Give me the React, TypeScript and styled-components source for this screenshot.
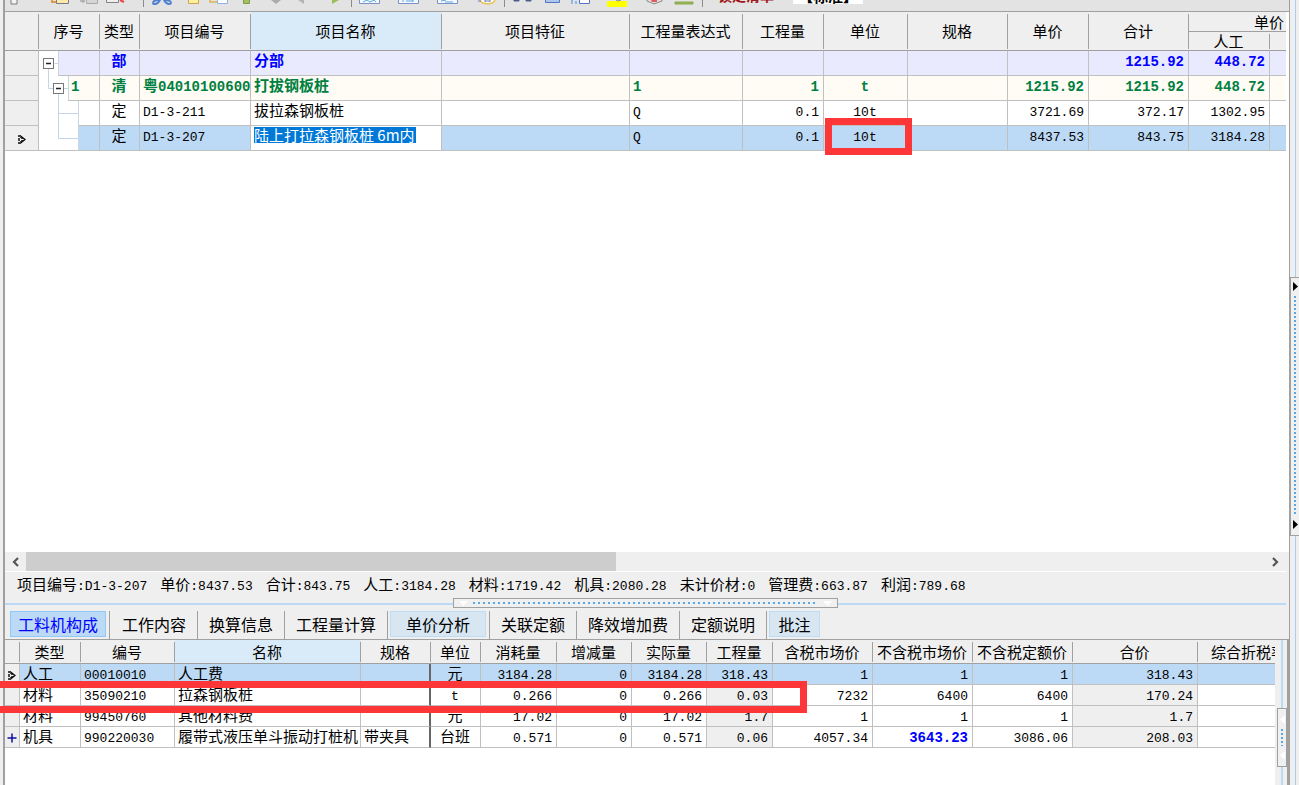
import React from 'react';
import styled, { createGlobalStyle, css } from 'styled-components';

const cjk = '"Noto Sans CJK SC", sans-serif';
const mono = '"Liberation Mono", "Noto Sans CJK SC", monospace';

const c = {
  face: '#efefef',
  bar: '#e3e3e3',
  edge: '#a0a0a0',
  rule: '#c0c0c0',
  hot: '#d9ebf8',
  sel: '#bcdaf6',
  group: '#eaeaff',
  item: '#fffbf5',
  blue: '#0000ff',
  green: '#008040',
  mark: '#fd3737',
};

const GlobalStyle = createGlobalStyle`
  * { box-sizing: border-box; }
  body { margin: 0; background: ${c.face}; font: 15px/18px ${cjk}; color: #000; }
  button, input, select { font: inherit; color: inherit; margin: 0; padding: 0; }
  svg { display: block; }
`;

const Window = styled.div`
  display: flex;
  height: 100vh;
  overflow: hidden;
  padding-left: 3px;
`;

const Main = styled.main`
  flex: 1;
  min-width: 0;
  display: flex;
  flex-direction: column;
  border-left: 2px solid ${c.edge};
`;

/* ---------- toolbar ---------- */

const Toolbar = styled.div`
  flex: none;
  height: 12px;
  display: flex;
  align-items: flex-end;
  overflow: hidden;
  background: ${c.bar};
  border-bottom: 1px solid ${c.edge};
  padding: 0 0 4px 5px;
`;

const ToolButton = styled.button<{ $gap: number }>`
  flex: none;
  border: 0;
  background: none;
  margin-right: ${(p) => p.$gap}px;
`;

const ToolRule = styled.span<{ $gap: number }>`
  flex: none;
  width: 1px;
  height: 12px;
  background: #8c8c8c;
  margin-right: ${(p) => p.$gap}px;
`;

const LockButton = styled.button`
  flex: none;
  border: 0;
  background: none;
  width: 58px;
  margin: 0 18px 3px 14px;
  font-size: 14px;
  font-weight: 700;
  color: #a01818;
  white-space: nowrap;
`;

const ModeSelect = styled.select`
  flex: none;
  appearance: none;
  border: 0;
  width: 70px;
  height: 16px;
  margin-bottom: 3px;
  background: #fff;
  font-weight: 700;
  line-height: 16px;
  text-align: center;
`;

/* ---------- grids ---------- */

const GridPane = styled.section`
  flex: 1;
  min-height: 0;
  background: #fff;
  padding-right: 3px;
`;

const Table = styled.table`
  width: 100%;
  table-layout: fixed;
  border-spacing: 0;
`;

const Th = styled.th<{ $hot?: boolean; $h?: number; $align?: string }>`
  position: relative;
  padding: 0 2px 0 0;
  height: ${(p) => p.$h ?? 24}px;
  font-weight: 400;
  line-height: 18px;
  text-align: ${(p) => p.$align ?? 'center'};
  white-space: nowrap;
  overflow: hidden;
  background: ${(p) => (p.$hot ? c.hot : c.face)};
  border-bottom: 1px solid ${c.edge};
  ${(p) => p.$align === 'left' && css`padding: 0 0 0 13px;`}
  &::after {
    content: '';
    position: absolute;
    top: 2px;
    bottom: 1px;
    right: 0;
    width: 1px;
    background: ${c.edge};
  }
  &:last-child::after { display: none; }
`;

type Tone = 'group' | 'item' | 'plain' | 'sel';

const Tr = styled.tr<{ $tone: Tone }>`
  background: ${(p) => ({ group: c.group, item: c.item, plain: '#fff', sel: c.sel })[p.$tone]};
  ${(p) => p.$tone === 'group' && css`color: ${c.blue}; font-weight: 700;`}
  ${(p) => p.$tone === 'item' && css`color: ${c.green}; font-weight: 700;`}
`;

const Td = styled.td<{ $align?: string; $h: number; $gray?: boolean; $dark?: boolean; $edit?: boolean }>`
  height: ${(p) => p.$h}px;
  padding: 0 4px ${(p) => (p.$h > 22 ? 6 : 2)}px 3px;
  line-height: 18px;
  text-align: ${(p) => p.$align ?? 'left'};
  white-space: nowrap;
  overflow: hidden;
  border-right: 1px solid ${c.rule};
  border-bottom: 1px solid ${c.rule};
  ${(p) => p.$gray && css`background: ${c.face};`}
  ${(p) => p.$edit && css`background: #fff;`}
  ${(p) => p.$dark && css`border-right: 2px solid #666;`}
  &:last-child { border-right: 0; }
`;

const Indicator = styled.td<{ $h: number }>`
  height: ${(p) => p.$h}px;
  padding: 0;
  background: ${c.face};
  border-right: 1px solid ${c.rule};
  border-bottom: 1px solid ${c.rule};
  svg { margin: 2px auto 0; }
`;

const TreeCell = styled.td<{ $last: boolean }>`
  padding: 0;
  background: ${(p) => (p.$last ? `linear-gradient(${c.rule}, ${c.rule}) 0 100% / 100% 1px no-repeat, #fff` : '#fff')};
  border-right: 1px solid ${c.rule};
`;

const TreeInner = styled.div`
  display: flex;
  height: 25px;
`;

const TreeLabel = styled.div<{ $tone: Tone }>`
  flex: 1;
  padding-left: 2px;
  background: ${(p) => ({ group: c.group, item: c.item, plain: '#fff', sel: c.sel })[p.$tone]};
  border-left: 1px solid #c9d6e2;
  border-bottom: 1px solid ${c.rule};
`;

const Latin = styled.span<{ $bold?: boolean; $color?: string }>`
  font-family: ${mono};
  font-size: ${(p) => (p.$bold ? 14 : 13)}px;
  font-weight: ${(p) => (p.$bold ? 700 : 400)};
  line-height: 0;
  color: ${(p) => p.$color ?? 'inherit'};
`;

const EditBox = styled.input`
  display: block;
  width: 162px;
  height: 16px;
  border: 0;
  outline: 0;
  background: #0078d7;
  color: #fff;
`;

const UnitMark = styled.span`
  position: absolute;
  z-index: 2;
  inset: -8px -5px -5px 1px;
  border: 7px solid ${c.mark};
  pointer-events: none;
`;

const MarkedTd = styled(Td)`
  position: relative;
  overflow: visible;
`;

/* ---------- scroll bar, summary, splitter ---------- */

const ScrollBar = styled.div`
  flex: none;
  display: flex;
  justify-content: space-between;
  height: 20px;
  margin-right: 3px;
  background: ${c.face};
  border-bottom: 1px solid #fff;
`;

const ScrollArrow = styled.button`
  width: 21px;
  border: 0;
  background: ${c.face};
  display: grid;
  place-items: center;
`;

const ScrollTrack = styled.div`
  flex: 1;
`;

const ScrollThumb = styled.div`
  width: 47.6%;
  height: 100%;
  background: #cdcdcd;
`;

const Summary = styled.div`
  flex: none;
  display: flex;
  gap: 13px;
  height: 26px;
  padding: 3px 0 0 12px;
  white-space: nowrap;
`;

const Splitter = styled.div`
  flex: none;
  height: 10px;
  margin-right: 3px;
  display: flex;
  justify-content: center;
  background: linear-gradient(${c.sel}, ${c.sel}) 0 5px / 100% 2px no-repeat;
`;

const SplitHandle = styled.div`
  width: 385px;
  display: flex;
  align-items: center;
  justify-content: space-between;
  border: 1px solid ${c.edge};
  background: #f0f0f0;
  padding: 0 5px;
`;

const HDots = styled.span`
  flex: 1;
  height: 2px;
  margin: 0 5px;
  background: repeating-linear-gradient(90deg, #5aa7e6 0 2px, transparent 2px 5px);
`;

/* ---------- tabs ---------- */

const Tabs = styled.nav`
  flex: none;
  display: flex;
  height: 32px;
  padding-top: 3px;
  border-bottom: 1px solid ${c.edge};
`;

const TabSlot = styled.div<{ $pad: string; $end?: boolean }>`
  display: flex;
  padding: ${(p) => p.$pad};
  border-right: ${(p) => (p.$end ? '0' : `1px solid ${c.edge}`)};
`;

const Tab = styled.button<{ $kind: 'active' | 'hot' | 'plain'; $w?: number }>`
  width: ${(p) => (p.$w ? `${p.$w}px` : 'auto')};
  height: 26px;
  padding: 0;
  font-size: 16px;
  line-height: 24px;
  white-space: nowrap;
  background: none;
  border: 0;
  ${(p) => p.$kind === 'active' && css`background: ${c.sel}; border: 1px solid #90c8f6; color: ${c.blue};`}
  ${(p) => p.$kind === 'hot' && css`background: #d8e6f2; border: 1px solid #c0dcf3;`}
`;

/* ---------- lower pane ---------- */

const LowerPane = styled.section`
  position: relative;
  flex: none;
  height: 145px;
  display: flex;
  background: #fff;
`;

const LowerGrid = styled.div`
  flex: 1;
  min-width: 0;
`;

const LowerStrip = styled.div`
  flex: none;
  width: 14px;
  background: linear-gradient(${c.sel}, ${c.sel}) 6px 0 / 2px 100% no-repeat, ${c.face};
  border-right: 2px solid ${c.edge};
  padding: 68px 0 0 2px;
`;

const StripHandle = styled.div`
  width: 10px;
  height: 59px;
  display: flex;
  flex-direction: column;
  align-items: center;
  justify-content: space-between;
  padding: 6px 0;
  border: 1px solid ${c.edge};
  background: #f0f0f0;
`;

const VDots = styled.span<{ $pitch: number }>`
  flex: 1;
  width: 2px;
  margin: 5px 0;
  background: repeating-linear-gradient(#5aa7e6 0 2px, transparent 2px ${(p) => p.$pitch}px);
`;

const RowMark = styled.span`
  position: absolute;
  z-index: 2;
  top: 41px;
  left: -5px;
  width: 807px;
  height: 32px;
  border: 7px solid ${c.mark};
  border-left: 0;
  pointer-events: none;
`;

/* ---------- right edge ---------- */

const SideStrip = styled.aside`
  flex: none;
  width: 10px;
  display: flex;
  flex-direction: column;
  border-left: 1px solid ${c.edge};
  background: linear-gradient(#a9cdf0, #a9cdf0) 5px 0 / 1px 100% no-repeat, ${c.face};
`;

const Space = styled.div<{ $grow: number }>`
  flex: ${(p) => p.$grow} 0 0;
`;

const SideHandle = styled.div`
  flex: none;
  height: 259px;
  display: flex;
  flex-direction: column;
  align-items: center;
  padding: 4px 0 6px;
  border: 1px solid ${c.edge};
  border-right: 0;
  background: #f0f0f0;
`;

/* ---------- drawings ---------- */

const Pointer = () => (
  <svg width="8" height="9" viewBox="0 0 8 9">
    <path d="M1 0v2M1 3v3M1 7v2M3 2v1M3 6v1M4 3v1M4 5v1" stroke="#000" strokeWidth="1.400" />
    <path d="M2 0.500L7 4.500L2 8.500" fill="none" stroke="#000" strokeWidth="1.200" />
  </svg>
);

const Triangle = ({ d, fill, w = 7, h = 9 }: { d: string; fill: string; w?: number; h?: number }) => (
  <svg width={w} height={h} viewBox={`0 0 ${w} ${h}`}>
    <path d={d} fill={fill} />
  </svg>
);

const Chevron = ({ right }: { right?: boolean }) => (
  <svg width="9" height="10" viewBox="0 0 9 10">
    <path d={right ? 'M2 1l4 4-4 4' : 'M7 1L3 5l4 4'} fill="none" stroke="#555" strokeWidth="2.200" />
  </svg>
);

const treeShapes: { w: number; box?: [number, number]; lines: string }[] = [
  { w: 19, box: [4, 7], lines: 'M15.500 12.500H19M9.500 18V25' },
  { w: 29, box: [14, 7], lines: 'M9.500 0V12.500H14M25 12.500H29M19.500 18V25' },
  { w: 39, lines: 'M19.500 0V25M19.500 12.500H39' },
  { w: 39, lines: 'M19.500 0V12.500H39' },
];

const TreeLines = ({ row }: { row: number }) => {
  const { w, box, lines } = treeShapes[row];
  return (
    <svg width={w} height="25" viewBox={`0 0 ${w} 25`}>
      <path d={lines} fill="none" stroke="#c3d5e6" />
      {box && (
        <>
          <rect x={box[0] + 0.5} y={box[1] + 0.5} width="10" height="10" fill="#fff" stroke="#777" />
          <path d={`M${box[0] + 3} ${box[1] + 5.5}h5`} stroke="#222" strokeWidth="1.500" />
        </>
      )}
    </svg>
  );
};

type Tool = { label: string; w: number; gap: number; art?: React.ReactNode };

/* Every drawing is seven units high and hangs from the top of the bar. */
const tools: Tool[] = [
  { label: '新建', w: 8, gap: 33, art: <path d="M1 0v4h6V0" fill="#f4f4f4" stroke="#777b86" /> },
  { label: '粘贴', w: 18, gap: 10, art: <><path d="M1 0v2h4" fill="none" stroke="#e09a4c" strokeWidth="2" /><path d="M5.500 0v3.500h12V0" fill="#ffe9a8" stroke="#777b86" /></> },
  { label: '复制', w: 19, gap: 8, art: <><path d="M1 1h5M4 0v3" stroke="#aaa" strokeWidth="1.500" /><path d="M7.500 0v3.500h11V0" fill="#d6d6d6" stroke="#aaa" /></> },
  { label: '删除', w: 19, gap: 18, art: <><path d="M.5 0v2.500h12V0" fill="#eee" stroke="#81838c" /><path d="M14 0l4 2" stroke="#e44" strokeWidth="2" /></> },
  { label: '', w: 1, gap: 8 },
  { label: '剪切', w: 20, gap: 16, art: <path d="M1 3c0-3 4-3 7-3-1 2-3 4-5 4S1 4 1 3zM19 3c0-3-4-3-7-3 1 2 3 4 5 4s2 0 2-1z" fill="none" stroke="#4f81cf" strokeWidth="1.800" /> },
  { label: '便签', w: 11, gap: 10, art: <path d="M.5 0v3.500h10V0" fill="#fff0a0" stroke="#cfa64a" /> },
  { label: '插入', w: 20, gap: 14, art: <><path d="M1 0v2h8" fill="#ffeb9c" stroke="#dcb45c" strokeWidth="1.500" /><path d="M8.500 0v3.500h10V0" fill="#fff" stroke="#8db2e3" /></> },
  { label: '标记', w: 8, gap: 18, art: <path d="M.5 0v3.500h6V0" fill="#a3c163" stroke="#7f9c45" /> },
  { label: '下移', w: 14, gap: 15, art: <path d="M2 0h10L7 4z" fill="#ababab" /> },
  { label: '后退', w: 6, gap: 28, art: <path d="M0 0h6v4z" fill="#b5b5b5" /> },
  { label: '前进', w: 8, gap: 11, art: <path d="M0 4V0h7z" fill="#9bbf58" /> },
  { label: '', w: 1, gap: 7 },
  { label: '视图一', w: 21, gap: 18, art: <><path d="M.5 0v3.500h20V0" fill="#f5f9ff" stroke="#7d90c8" /><path d="M4 2l4-2 3 2 4-2 2 2" fill="none" stroke="#55a9dc" /></> },
  { label: '视图二', w: 21, gap: 18, art: <><path d="M.5 0v3.500h20V0" fill="#f5f9ff" stroke="#7d90c8" /><path d="M5 2V0M8 1h7M15 2V0" stroke="#55a9dc" /></> },
  { label: '视图三', w: 21, gap: 20, art: <><path d="M.5 0v3.500h20V0" fill="#f5f9ff" stroke="#7d90c8" /><path d="M4 1l5-1M8 2h8" stroke="#55a9dc" /></> },
  { label: '查看', w: 18, gap: 8, art: <><path d="M2 0c2 5 13 5 15 0" fill="#fff" stroke="#eac34c" strokeWidth="1.500" /><path d="M7 2V0M12 2V0M7 1h5M0 1h3" stroke="#6c7fc0" /></> },
  { label: '', w: 1, gap: 8 },
  { label: '查找', w: 19, gap: 13, art: <path d="M1 0v1h5V0M13 0v1h5V0" fill="#4c5f8c" stroke="#4c5f8c" /> },
  { label: '窗口', w: 15, gap: 11, art: <path d="M.5 0v2.500h14V0" fill="#abc7ee" stroke="#5575c2" /> },
  { label: '布局', w: 20, gap: 16, art: <><path d="M1 4V0M5 4V1" stroke="#8db8e8" strokeWidth="2" /><path d="M8.500 0v3.500h10V0" fill="#fff" stroke="#5575c2" /></> },
  { label: '颜色', w: 20, gap: 19, art: <><path d="M0 1h20v6H0z" fill="#ff0" /><path d="M9 0l2 1 3-1" stroke="#888" fill="none" /></> },
  { label: '模型', w: 17, gap: 11, art: <><path d="M1 0v1l7 3 8-3V0" fill="#ddd" stroke="#8b8b8b" /><path d="M5 0h6v2H6z" fill="#e25b5b" /></> },
  { label: '填充', w: 20, gap: 8, art: <path d="M1 2h18v2H1z" fill="#9bb857" stroke="#8aa84a" /> },
  { label: '', w: 1, gap: 0 },
];

/* ---------- data ---------- */

const topWidths = [34, 61, 40, 111, 191, 188, 113, 81, 84, 100, 81, 100, 81];
const topHeads = ['', '序号', '类型', '项目编号', '项目名称', '项目特征', '工程量表达式', '工程量', '单位', '规格', '单价', '合计'];

type TopRow = {
  tone: Tone; no: string; type: string; prefix?: string; code: string; name: string;
  expr: string; qty: string; unit: string; price: string; total: string; labor: string;
};

const topRows: TopRow[] = [
  { tone: 'group', no: '', type: '部', code: '', name: '分部', expr: '', qty: '', unit: '', price: '', total: '1215.92', labor: '448.72' },
  { tone: 'item', no: '1', type: '清', prefix: '粤', code: '040101006001', name: '打拔钢板桩', expr: '1', qty: '1', unit: 't', price: '1215.92', total: '1215.92', labor: '448.72' },
  { tone: 'plain', no: '', type: '定', code: 'D1-3-211', name: '拔拉森钢板桩', expr: 'Q', qty: '0.1', unit: '10t', price: '3721.69', total: '372.17', labor: '1302.95' },
  { tone: 'sel', no: '', type: '定', code: 'D1-3-207', name: '陆上打拉森钢板桩 6m内', expr: 'Q', qty: '0.1', unit: '10t', price: '8437.53', total: '843.75', labor: '3184.28' },
];

const summary: [string, string][] = [
  ['项目编号', 'D1-3-207'], ['单价', '8437.53'], ['合计', '843.75'], ['人工', '3184.28'], ['材料', '1719.42'],
  ['机具', '2080.28'], ['未计价材', '0'], ['管理费', '663.87'], ['利润', '789.68'],
];

const lowWidths = [15, 61, 94, 186, 70, 50, 76, 75, 75, 66, 100, 100, 100, 125];
const lowHeads = ['', '类型', '编号', '名称', '规格', '单位', '消耗量', '增减量', '实际量', '工程量', '含税市场价', '不含税市场价', '不含税定额价', '合价', '综合折税率'];

const lowRows = [
  ['人工', '00010010', '人工费', '', '元', '3184.28', '0', '3184.28', '318.43', '1', '1', '1', '318.43'],
  ['材料', '35090210', '拉森钢板桩', '', 't', '0.266', '0', '0.266', '0.03', '7232', '6400', '6400', '170.24'],
  ['材料', '99450760', '其他材料费', '', '元', '17.02', '0', '17.02', '1.7', '1', '1', '1', '1.7'],
  ['机具', '990220030', '履带式液压单斗振动打桩机', '带夹具', '台班', '0.571', '0', '0.571', '0.06', '4057.34', '3643.23', '3086.06', '208.03'],
];

const tabs: { name: string; kind: 'active' | 'hot' | 'plain'; w?: number; pad: string }[] = [
  { name: '工料机构成', kind: 'active', w: 96, pad: '0 3px 0 5px' },
  { name: '工作内容', kind: 'plain', pad: '0 11px 0 12px' },
  { name: '换算信息', kind: 'plain', pad: '0 11px' },
  { name: '工程量计算', kind: 'plain', pad: '0 11px' },
  { name: '单价分析', kind: 'hot', w: 96, pad: '0 3px 0 2px' },
  { name: '关联定额', kind: 'plain', pad: '0 11px' },
  { name: '降效增加费', kind: 'plain', pad: '0 11px' },
  { name: '定额说明', kind: 'plain', pad: '0 11px' },
  { name: '批注', kind: 'hot', w: 51, pad: '0 2px' },
];

const isLatin = (s: string) => /^[\x20-\x7e]+$/.test(s);

const Text = ({ s, bold, color }: { s: string; bold?: boolean; color?: string }) =>
  isLatin(s) ? <Latin $bold={bold} $color={color}>{s}</Latin> : <>{s}</>;

const TopGrid = () => (
  <Table>
    <colgroup>
      {topWidths.map((w, i) => <col key={i} width={w} />)}
      <col />
    </colgroup>
    <thead>
      <tr>
        {topHeads.map((h, i) => <Th key={i} rowSpan={2} $hot={i === 4}>{h}</Th>)}
        <Th colSpan={2} $h={20} $align="right">单价</Th>
      </tr>
      <tr>
        <Th $h={19}>人工</Th>
        <Th $h={19} />
      </tr>
    </thead>
    <tbody>
      {topRows.map((r, i) => {
        const bold = r.tone === 'group' || r.tone === 'item';
        const last = i === topRows.length - 1;
        return (
          <Tr key={i} $tone={r.tone}>
            <Indicator $h={25}>{last && <Pointer />}</Indicator>
            <TreeCell $last={last}>
              <TreeInner>
                <TreeLines row={i} />
                <TreeLabel $tone={r.tone}><Text s={r.no} bold={bold} /></TreeLabel>
              </TreeInner>
            </TreeCell>
            <Td $h={25} $align="center">{r.type}</Td>
            <Td $h={25}>{r.prefix}<Text s={r.code} bold={bold} /></Td>
            <Td $h={25} $edit={last}>
              {last ? <EditBox aria-label="项目名称" defaultValue={r.name} /> : r.name}
            </Td>
            <Td $h={25} />
            <Td $h={25}><Text s={r.expr} bold={bold} /></Td>
            <Td $h={25} $align="right"><Text s={r.qty} bold={bold} /></Td>
            {last ? (
              <MarkedTd $h={25} $align="center"><Text s={r.unit} /><UnitMark /></MarkedTd>
            ) : (
              <Td $h={25} $align="center"><Text s={r.unit} bold={bold} /></Td>
            )}
            <Td $h={25} />
            <Td $h={25} $align="right"><Text s={r.price} bold={bold} /></Td>
            <Td $h={25} $align="right"><Text s={r.total} bold={bold} /></Td>
            <Td $h={25} $align="right"><Text s={r.labor} bold={bold} /></Td>
            <Td $h={25} />
          </Tr>
        );
      })}
    </tbody>
  </Table>
);

const lowAlign = (i: number) => (i < 4 ? 'left' : i === 4 ? 'center' : 'right');

const ResourceGrid = () => (
  <Table>
    <colgroup>
      {lowWidths.map((w, i) => <col key={i} width={w} />)}
      <col />
    </colgroup>
    <thead>
      <tr>
        {lowHeads.map((h, i) => (
          <Th key={i} $hot={i === 3} $align={i === 14 ? 'left' : 'center'}>{h}</Th>
        ))}
      </tr>
    </thead>
    <tbody>
      {lowRows.map((row, r) => (
        <Tr key={r} $tone={r === 0 ? 'sel' : 'plain'}>
          <Indicator $h={21}>
            {r === 0 && <Pointer />}
            {r === 3 && (
              <svg width="10" height="10" viewBox="0 0 10 10">
                <path d="M5 0.500v9M0.500 5h9" stroke="#1010a0" strokeWidth="1.500" />
              </svg>
            )}
          </Indicator>
          {row.map((v, i) => {
            const changed = v === '3643.23';
            return (
              <Td key={i} $h={21} $align={lowAlign(i)} $dark={i === 3} $gray={r > 0 && (i === 8 || i === 12)}>
                <Text s={v} bold={changed} color={changed ? c.blue : undefined} />
              </Td>
            );
          })}
          <Td $h={21} />
        </Tr>
      ))}
    </tbody>
  </Table>
);

export default function App() {
  return (
    <>
      <GlobalStyle />
      <Window>
        <Main>
          <Toolbar>
            {tools.map((t, i) =>
              t.art ? (
                <ToolButton key={i} $gap={t.gap} aria-label={t.label}>
                  <svg width={t.w} height="7" viewBox={`0 0 ${t.w} 7`}>{t.art}</svg>
                </ToolButton>
              ) : (
                <ToolRule key={i} $gap={t.gap} />
              ),
            )}
            <LockButton>锁定清单</LockButton>
            <ModeSelect aria-label="模式" defaultValue="std">
              <option value="std">【标准】</option>
            </ModeSelect>
          </Toolbar>
          <GridPane><TopGrid /></GridPane>
          <ScrollBar>
            <ScrollArrow aria-label="向左"><Chevron /></ScrollArrow>
            <ScrollTrack><ScrollThumb /></ScrollTrack>
            <ScrollArrow aria-label="向右"><Chevron right /></ScrollArrow>
          </ScrollBar>
          <Summary>
            {summary.map(([k, v]) => (
              <span key={k}>{k}<Latin>:{v}</Latin></span>
            ))}
          </Summary>
          <Splitter>
            <SplitHandle>
              <Triangle d="M0 0h9L4.500 5z" fill="#fff" w={9} h={5} />
              <HDots />
              <Triangle d="M0 0h9L4.500 5z" fill="#fff" w={9} h={5} />
            </SplitHandle>
          </Splitter>
          <Tabs>
            {tabs.map((t, i) => (
              <TabSlot key={t.name} $pad={t.pad} $end={i === tabs.length - 1}>
                <Tab $kind={t.kind} $w={t.w}>{t.name}</Tab>
              </TabSlot>
            ))}
          </Tabs>
          <LowerPane>
            <LowerGrid><ResourceGrid /></LowerGrid>
            <LowerStrip>
              <StripHandle>
                <Triangle d="M5 0v9L0 4.500z" fill="#fff" w={5} />
                <VDots $pitch={4} />
                <Triangle d="M5 0v9L0 4.500z" fill="#fff" w={5} />
              </StripHandle>
            </LowerStrip>
            <RowMark />
          </LowerPane>
        </Main>
        <SideStrip>
          <Space $grow={277} />
          <SideHandle>
            <Triangle d="M1 0v9l5-4.500z" fill="#000" />
            <VDots $pitch={4} />
            <Triangle d="M1 0v9l5-4.500z" fill="#000" />
          </SideHandle>
          <Space $grow={249} />
        </SideStrip>
      </Window>
    </>
  );
}
